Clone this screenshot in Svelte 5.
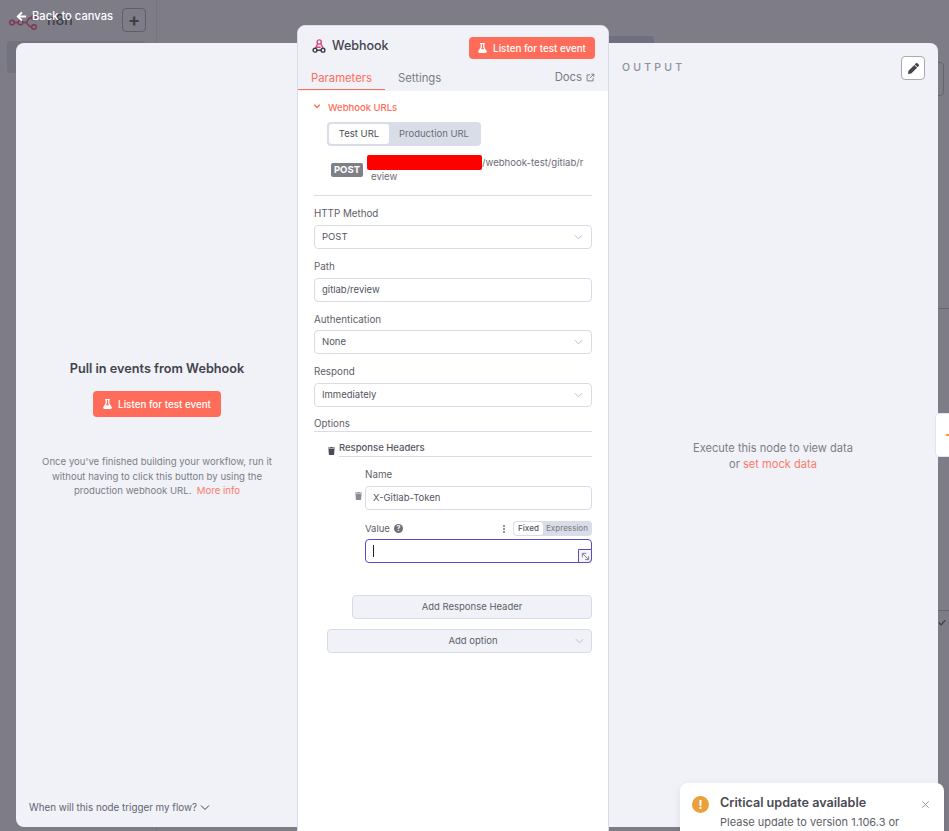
<script>
  const fields = [
    { label: 'HTTP Method', value: 'POST', select: true },
    { label: 'Path', value: 'gitlab/review', select: false },
    { label: 'Authentication', value: 'None', select: true },
    { label: 'Respond', value: 'Immediately', select: true }
  ];
</script>

{#snippet flask()}
  <svg class="flask" viewBox="0 0 448 512" aria-hidden="true"><path fill="currentColor" d="M437.2 403.5 320 215V64h8c13.300 0 24-10.700 24-24V24c0-13.300-10.700-24-24-24H120c-13.300 0-24 10.700-24 24v16c0 13.300 10.700 24 24 24h8v151L10.800 403.500C-18.500 450.600 15.300 512 70.900 512h306.200c55.700 0 89.400-61.500 60.100-108.500zM137.900 320l48.200-77.600c3.700-5.200 5.800-11.600 5.800-18.400V64h64v160c0 6.900 2.200 13.200 5.800 18.400l48.200 77.600h-172z"/></svg>
{/snippet}

{#snippet trash()}
  <svg class="trash" viewBox="0 0 448 512" aria-hidden="true"><path fill="currentColor" d="M432 32H312l-9.400-18.700A24 24 0 0 0 281.100 0H166.800a23.700 23.700 0 0 0-21.400 13.300L136 32H16A16 16 0 0 0 0 48v32a16 16 0 0 0 16 16h416a16 16 0 0 0 16-16V48a16 16 0 0 0-16-16zM53.200 467a48 48 0 0 0 47.900 45h245.800a48 48 0 0 0 47.900-45L416 128H32z"/></svg>
{/snippet}

{#snippet chevron()}
  <svg class="chev" viewBox="0 0 10 6" aria-hidden="true"><path d="M1 1l4 4 4-4" fill="none" stroke="currentColor" stroke-width="1"/></svg>
{/snippet}

<div class="page">
  <div class="canvas">
    <div class="side">
      <div class="brand">
        <svg class="logo" viewBox="0 0 30 16" aria-hidden="true"><g fill="none" stroke="#7c3a55" stroke-width="1.500"><circle cx="3" cy="6.500" r="2.300"/><circle cx="11.500" cy="6.500" r="2.300"/><circle cx="25" cy="1.500" r="2.300"/><circle cx="25" cy="11" r="2.300"/><path d="M5.300 6.500h4M13.800 6.500h2.500c3 0 2-5 6.400-5M16.300 6.500c3 0 2 4.500 6.400 4.500"/></g></svg>
        <span class="n8n">n8n</span>
        <span class="plus">+</span>
      </div>
      <div class="side-item"></div>
    </div>
    <div class="mid-tab"></div>
    <div class="right-box"></div>
    <div class="right-line one"></div>
    <div class="right-line two"></div>
    <svg class="right-check" viewBox="0 0 10 8" aria-hidden="true"><path d="M1 4l3 3 5-6" fill="none" stroke="#3c3b44" stroke-width="1.500"/></svg>
  </div>

  <a class="back" href="#back">
    <svg viewBox="0 0 12 12" aria-hidden="true"><path d="M11 6H2.500M6.500 1.500 2 6l4.500 4.500" fill="none" stroke="#fff" stroke-width="2.200"/></svg>
    Back to canvas
  </a>

  <div class="modal">
    <section class="left">
      <div class="left-center">
        <h2>Pull in events from Webhook</h2>
        <button class="cta big">{@render flask()}Listen for test event</button>
        <p>Once you've finished building your workflow, run it without having to click this button by using the production webhook URL. <span class="link">&nbsp;More info</span></p>
      </div>
      <div class="when">When will this node trigger my flow? {@render chevron()}</div>
    </section>

    <section class="right">
      <div class="output">OUTPUT</div>
      <button class="edit" aria-label="Edit output">
        <svg viewBox="0 0 512 512" aria-hidden="true"><path fill="currentColor" d="M497.900 142.100l-46.100 46.100c-4.700 4.700-12.300 4.700-17 0l-111-111c-4.700-4.700-4.700-12.300 0-17l46.100-46.100c18.700-18.700 49.100-18.700 67.900 0l60.100 60.100c18.800 18.700 18.800 49.100 0 67.900zM284.200 99.800L21.600 362.400.4 483.900c-2.900 16.400 11.400 30.600 27.800 27.800l121.500-21.300 262.600-262.600c4.700-4.700 4.700-12.300 0-17l-111-111c-4.800-4.700-12.400-4.700-17.100 0z"/></svg>
      </button>
      <div class="empty">Execute this node to view data<br />or <span class="link">set mock data</span></div>
    </section>
  </div>

  <div class="side-tab"><span class="dot"></span></div>

  <section class="main">
    <header class="head">
      <div class="title-row">
        <svg class="hook" viewBox="0 0 14 14" aria-hidden="true"><g fill="none" stroke-width="1.400"><circle cx="7.200" cy="3" r="2.100" stroke="#d6497a"/><path d="M5.700 4.600 3.200 9.700M8.800 4.600l2.300 4.700M4.600 8.200h4" stroke="#d6497a"/><circle cx="3" cy="11.200" r="1.900" stroke="#3d3d47"/><circle cx="11" cy="11.200" r="1.900" stroke="#3d3d47"/><path d="M5 11.200h4" stroke="#3d3d47"/></g></svg>
        <span class="title">Webhook</span>
        <button class="cta small">{@render flask()}Listen for test event</button>
      </div>
      <nav class="tabs">
        <span class="tab active">Parameters</span>
        <span class="tab">Settings</span>
        <span class="docs">Docs
          <svg viewBox="0 0 12 12" aria-hidden="true"><path d="M5.500 2.500H1.500v8h8V6.500M7 1.500h3.500V5M10.500 1.500 5 7" fill="none" stroke="currentColor" stroke-width="1.300"/></svg>
        </span>
      </nav>
    </header>

    <div class="form">
      <div class="urls-head">
        <svg viewBox="0 0 10 7" aria-hidden="true"><path d="M1 1l4 4 4-4" fill="none" stroke="#ff6d5a" stroke-width="2"/></svg>
        Webhook URLs
      </div>
      <div class="switch">
        <span class="sw on">Test URL</span>
        <span class="sw">Production URL</span>
      </div>
      <div class="url-row">
        <span class="badge">POST</span>
        <div class="url"><span class="redact"></span>/webhook-test/gitlab/r<br /><span class="wrap">eview</span></div>
      </div>
      <hr class="rule" />

      {#each fields as f}
        <label class="lbl" for={f.label}>{f.label}</label>
        <div class="input" id={f.label}>
          <span>{f.value}</span>
          {#if f.select}{@render chevron()}{/if}
        </div>
      {/each}

      <div class="opt-label">Options</div>

      <div class="rh">
        <span class="rh-trash">{@render trash()}</span>
        <div class="rh-title">Response Headers</div>
      </div>

      <div class="pair">
        <span class="pair-trash">{@render trash()}</span>
        <div class="pair-body">
          <div class="lbl first">Name</div>
          <div class="input name"><span>X-Gitlab-Token</span></div>
          <div class="val-row">
            <span>Value</span>
            <span class="help">?</span>
            <span class="dots"><i></i><i></i><i></i></span>
            <span class="mode"><b>Fixed</b><em>Expression</em></span>
          </div>
          <div class="input focus">
            <span class="caret"></span>
            <span class="expand">
              <svg viewBox="0 0 10 10" aria-hidden="true"><path d="M2 2l6 6M8.500 4.500v4H4.500M1.500 6V1.500H6" fill="none" stroke="#6b6b76" stroke-width=".9"/></svg>
            </span>
          </div>
        </div>
      </div>

      <button class="add header">Add Response Header</button>
      <div class="add option"><span>Add option</span>{@render chevron()}</div>
    </div>
  </section>

  <aside class="toast">
    <span class="warn">!</span>
    <div class="toast-body">
      <strong>Critical update available</strong>
      <p>Please update to version 1.106.3 or</p>
    </div>
    <svg class="close" viewBox="0 0 10 10" aria-hidden="true"><path d="M1.500 1.500l7 7M8.500 1.500l-7 7" stroke="#8d8d98" stroke-width="1" fill="none"/></svg>
  </aside>
</div>

<style>
  :global(body) { margin: 0; }
  * { box-sizing: border-box; }
  .page {
    position: relative; width: 949px; height: 831px; overflow: hidden;
    background: #7e7c87; font-family: Inter, "Liberation Sans", sans-serif; color: #555;
  }
  .canvas { position: absolute; inset: 0; }
  .side { width: 157px; height: 100%; border-right: 1px solid #75737e; padding: 8px 7px; }
  .brand { display: flex; align-items: flex-start; height: 24px; position: relative; }
  .logo { width: 30px; height: 16px; margin: 8px 0 0 2px; overflow: visible; }
  .n8n { font-size: 14px; font-weight: 500; color: #3f3e47; margin: 3px 0 0 8px; line-height: 18px; }
  .plus { position: absolute; left: 115px; top: 0; width: 24px; height: 24px; border: 1px solid #5f5e68; border-radius: 4px; color: #3f3e47; font-size: 18px; font-weight: 700; line-height: 22px; text-align: center; }
  .side-item { margin-top: 9px; height: 32px; width: 139px; background: #73737f; border-radius: 4px; }
  .mid-tab { position: absolute; left: 600px; top: 36px; width: 54px; height: 12px; background: #6e7080; border-radius: 3px; }
  .right-box { position: absolute; left: 930px; top: 62px; width: 14px; height: 34px; border: 1px solid #66656f; border-radius: 4px; }
  .right-line { position: absolute; left: 938px; width: 11px; height: 1px; background: #66656f; }
  .right-line.one { top: 308px; }
  .right-line.two { top: 610px; }
  .right-check { position: absolute; left: 938px; top: 619px; width: 8px; height: 7px; }

  .back { position: absolute; left: 16px; top: 9px; display: flex; align-items: center; gap: 5px; color: #fff; font-size: 11.200px; font-weight: 500; text-decoration: none; line-height: 14px; }
  .back svg { width: 11px; height: 11px; }

  .modal { position: absolute; left: 16px; top: 43px; width: 922px; height: 784px; border-radius: 8px; background: #f0f2f8; display: flex; }
  .left { width: 282px; display: flex; flex-direction: column; position: relative; }
  .left-center { margin-top: 311px; display: flex; flex-direction: column; align-items: center; padding: 0 20px; }
  h2 { margin: 0; font-size: 12.700px; font-weight: 600; color: #43434d; line-height: 30px; }
  .left-center p { margin: 38px 0 0; width: 240px; text-align: center; font-size: 9.600px; line-height: 14.500px; color: #7d7d87; }
  .cta.big { margin-top: 7px; }
  .link { color: #ff6d5a; opacity: .9; }
  .when { position: absolute; left: 13px; bottom: 14px; font-size: 9.800px; color: #62626d; display: flex; align-items: center; gap: 3px; }
  .when .chev { width: 10px; height: 7px; color: #3f3f49; }

  .right { flex: 1; position: relative; margin-left: 310px; }
  .output { position: absolute; left: 14px; top: 18px; font-size: 10.500px; font-weight: 500; letter-spacing: 3.200px; color: #8f8f98; }
  .edit { position: absolute; right: 13px; top: 13px; width: 24px; height: 24px; padding: 0; background: #fff; border: 1px solid #aaaab4; border-radius: 4px; color: #45454e; display: grid; place-items: center; }
  .edit svg { width: 11px; height: 11px; }
  .empty { position: absolute; left: 0; right: 0; top: 397px; text-align: center; font-size: 11.100px; line-height: 16px; color: #7d7d87; }

  .side-tab { position: absolute; left: 935px; top: 413px; width: 20px; height: 44px; background: #fff; border: 1px solid #e3e5ee; border-radius: 4px; }
  .dot { position: absolute; left: 10px; top: 20px; width: 5px; height: 2px; background: #ff9b26; }

  .main { position: absolute; left: 297px; top: 25px; width: 312px; height: 830px; background: #fff; border: 1px solid #d9dce7; border-radius: 8px 8px 0 0; overflow: hidden; }
  .head { background: #f0f2f8; height: 65px; }
  .title-row { display: flex; align-items: center; padding: 0 13px 0 14px; height: 44px; }
  .hook { width: 14px; height: 14px; margin: -5px 6px 0 0; }
  .title { font-size: 12.500px; font-weight: 500; color: #44444e; flex: 1; margin-top: -6px; }
  .cta { border: 0; border-radius: 4px; background: #ff6d5a; color: #fff; font-family: inherit; font-size: 9.800px; font-weight: 500; display: inline-flex; align-items: center; justify-content: center; gap: 6px; padding: 0; }
  .cta.small { width: 126px; height: 22px; }
  .cta.big { width: 128px; height: 26px; }
  .flask { width: 9px; height: 10px; }
  .tabs { display: flex; align-items: flex-end; height: 21px; padding-right: 13px; font-size: 11.300px; color: #7b7b85; }
  .tab { padding: 0 13px 5px; line-height: 15px; }
  .tab.active { color: #ff6d5a; border-bottom: 1px solid #ff6d5a; padding: 0 0 3px; width: 87px; text-align: center; margin-bottom: 1px; }
  .docs { margin-left: auto; padding-bottom: 6px; line-height: 15px; display: flex; align-items: center; gap: 4px; }
  .docs svg { width: 9px; height: 9px; }

  .form { padding: 9px 16px 0 16px; font-size: 9.500px; color: #5e5e68; }
  .urls-head { display: flex; align-items: center; gap: 7px; color: #ff6d5a; font-size: 9.500px; font-weight: 500; height: 14px; margin-left: -1px; }
  .urls-head svg { width: 8px; height: 5px; margin-top: -2px; }
  .switch { display: flex; margin: 8px 0 0 13px; height: 24px; width: 154px; padding: 2px; background: #d9dde7; border-radius: 4px; }
  .sw { display: flex; align-items: center; justify-content: center; color: #6d6d78; border-radius: 3px; flex: 1; padding-bottom: 2px; }
  .sw.on { background: #fff; color: #4b4b55; flex: 0 0 60px; }
  .url-row { display: flex; margin: 9px 0 0 17px; }
  .badge { align-self: flex-start; margin-top: 8px; width: 32px; height: 14px; background: #7f7f87; color: #fff; font-weight: 700; font-size: 9.500px; text-align: center; line-height: 14px; border-radius: 2px; }
  .url { margin-left: 4px; padding-top: 1px; line-height: 14px; font-size: 9.600px; color: #6c6c76; width: 222px; }
  .redact { display: inline-block; width: 115px; height: 15px; margin: -1px 0 -1px; background: #ff0000; border-radius: 2px; vertical-align: top; }
  .wrap { margin-left: 4px; }
  .rule { border: 0; border-top: 1px solid #d9dce7; margin: 11px 0 0; }
  .lbl { display: block; font-size: 9.800px; line-height: 14px; margin-top: 11px; color: #5e5e68; }
  .input { display: flex; align-items: center; justify-content: space-between; height: 24px; margin-top: 4px; padding: 0 8px 2px 7px; background: #fff; border: 1px solid #d9dce7; border-radius: 4px; color: #55555f; font-size: 9.500px; }
  .lbl:nth-of-type(3) + .input { margin-top: 3px; }
  .chev { width: 9px; height: 6px; color: #b4b4bd; }
  .input .chev { margin-top: 2px; }
  .opt-label { margin-top: 10px; height: 15px; font-size: 9.800px; line-height: 14px; border-bottom: 1px solid #d9dce7; }
  .rh { display: flex; margin: 9px 0 0 14px; }
  .rh-trash { width: 12px; padding-top: 6px; }
  .trash { display: block; width: 7px; height: 8px; color: #4b4b55; }
  .rh-title { flex: 1; height: 16px; border-bottom: 1px solid #d9dce7; line-height: 14px; color: #55555f; font-weight: 500; font-size: 9.500px; margin-left: -1px; }
  .pair { display: flex; margin-top: 11px; margin-left: 40px; position: relative; }
  .pair-trash { position: absolute; left: 1px; top: 24px; }
  .pair-trash .trash { color: #8a8a94; }
  .pair-body { flex: 1; margin-left: 11px; }
  .lbl.first { margin-top: 0; }
  .val-row { display: flex; align-items: center; height: 15px; margin-top: 11px; gap: 4px; }
  .help { width: 9px; height: 9px; border-radius: 50%; background: #6f6f79; color: #fff; font-size: 7px; font-weight: 700; text-align: center; line-height: 9px; }
  .dots { margin-left: auto; display: flex; flex-direction: column; gap: 1px; margin-right: 4px; }
  .dots i { width: 2px; height: 2px; background: #6f6f79; border-radius: 50%; }
  .mode { display: flex; height: 15px; width: 79px; background: #d9dde7; border-radius: 4px; padding: 1px; font-size: 8.100px; align-items: stretch; }
  .mode b { font-weight: 500; background: #fff; border-radius: 3px; width: 29px; text-align: center; line-height: 13px; color: #55555f; }
  .mode em { font-style: normal; flex: 1; text-align: center; line-height: 13px; color: #7a7a85; }
  .input.focus { border-color: #5a4cc2; margin-top: 3px; position: relative; padding: 0 8px 0 7px; justify-content: flex-start; }
  .caret { width: 1px; height: 12px; background: #222; }
  .expand { position: absolute; right: -1px; bottom: -1px; width: 14px; height: 14px; border: 1px solid #5a4cc2; border-radius: 0 0 4px 0; background: #f4f4f9; display: grid; place-items: center; }
  .expand svg { width: 9px; height: 9px; }
  .add { display: flex; align-items: center; height: 24px; background: #f0f2f8; border: 1px solid #d9dce7; border-radius: 4px; font-family: inherit; font-size: 9.500px; font-weight: 400; color: #5e5e68; }
  .add.header { width: 240px; margin: 32px 0 0 38px; justify-content: center; padding: 0 0 2px; }
  .add.option { width: 265px; margin: 10px 0 0 13px; position: relative; justify-content: center; padding: 0 0 2px 27px; }
  .add.option .chev { position: absolute; right: 7px; top: 8px; }

  .toast { position: absolute; left: 680px; top: 783px; width: 264px; height: 60px; background: #fff; border-radius: 8px 8px 0 0; display: flex; padding: 12px 14px 0 12px; box-shadow: 0 2px 8px rgba(0,0,0,.08); }
  .warn { width: 17px; height: 17px; margin-top: 1px; border-radius: 50%; background: #e9a23b; color: #fff; font-size: 12px; font-weight: 700; text-align: center; line-height: 17px; flex: none; }
  .toast-body { margin-left: 11px; flex: 1; }
  .toast strong { display: block; font-size: 12.600px; font-weight: 600; color: #4a4a54; line-height: 16px; }
  .toast p { margin: 4px 0 0; font-size: 11px; line-height: 14px; color: #5e5e68; white-space: nowrap; }
  .close { width: 9px; height: 9px; margin-top: 5px; }
</style>
